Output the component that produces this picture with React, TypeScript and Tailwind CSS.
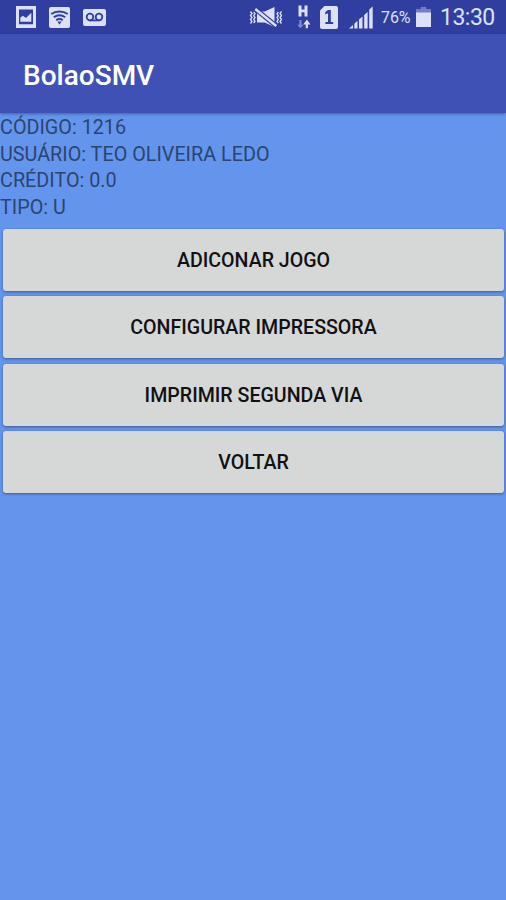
const infoLines = [
  'CÓDIGO: 1216',
  'USUÁRIO: TEO OLIVEIRA LEDO',
  'CRÉDITO: 0.0',
  'TIPO: U',
];

const menuItems = [
  'ADICONAR JOGO',
  'CONFIGURAR IMPRESSORA',
  'IMPRIMIR SEGUNDA VIA',
  'VOLTAR',
];

function ImageIcon() {
  return (
    <svg width="20" height="22" viewBox="0 0 20 22" className="shrink-0">
      <path fill="currentColor" fillRule="evenodd" d="M0 0h20v22H0zM3 3.5v14.7h14V3.5z" />
      <path fill="currentColor" d="M4.3 15.8v-4.3l2.7-1.8 3 2.2 5.3-5.2v9.1z" />
    </svg>
  );
}

function WifiIcon() {
  return (
    <svg width="21" height="21" viewBox="0 0 21 21" className="shrink-0">
      <rect width="21" height="21" rx="2" fill="currentColor" />
      <g fill="none" stroke="#303f9f" strokeWidth="2">
        <path d="M2.3 7c4.7-3.4 11.7-3.4 16.4 0" />
        <path d="M4.8 10.2c3.4-2.4 8-2.4 11.4 0" />
        <path d="M7.2 13.2c2-1.4 4.6-1.4 6.6 0" />
      </g>
      <path fill="#303f9f" d="M8.5 14.6h4L10.5 17.8z" />
    </svg>
  );
}

function VoicemailIcon() {
  return (
    <svg width="23" height="17" viewBox="0 0 23 17" className="shrink-0">
      <rect width="23" height="17" rx="2" fill="currentColor" />
      <g fill="none" stroke="#303f9f" strokeWidth="1.8">
        <circle cx="7" cy="8" r="3.3" />
        <circle cx="16" cy="8" r="3.3" />
        <path d="M7 11.4h9" />
      </g>
    </svg>
  );
}

function VibrateIcon() {
  return (
    <svg width="34" height="21" viewBox="0 0 34 21" className="shrink-0">
      <g fill="none" stroke="currentColor" strokeWidth="1.3">
        <path d="M1.5 4.5l1.5 2-1.5 2 1.5 2-1.5 2 1.5 2-1.5 2" />
        <path d="M4.7 5l1.3 1.8-1.3 1.9L6 10.5l-1.3 1.9L6 14.2 4.7 16" />
        <path d="M32.5 4.5l-1.5 2 1.5 2-1.5 2 1.5 2-1.5 2 1.5 2" />
        <path d="M29.3 5L28 6.8l1.3 1.9-1.3 1.8 1.3 1.9-1.3 1.8 1.3 1.8" />
      </g>
      <path fill="currentColor" d="M8 4.5h7.7L25.5 0v20l-9.8-4.5H8z" />
      <path stroke="#303f9f" strokeWidth="4.8" d="M6 1.8l21.5 17.4" />
      <path stroke="currentColor" strokeWidth="2.4" d="M6.3 2l21 17" />
    </svg>
  );
}

function DataIcon() {
  return (
    <svg width="14" height="24" viewBox="0 0 14 24" className="shrink-0">
      <path fill="currentColor" d="M1.5 .5h3v4h3v-4h3v11h-3V7.2h-3v4.3h-3z" />
      <path fill="currentColor" opacity=".5" d="M2.4 15h2v4.8h2l-3 3.4-3-3.4h2z" />
      <path fill="currentColor" d="M8.7 23.2h2.3v-3.8h2.5L9.9 14.6l-3.7 4.8h2.5z" />
    </svg>
  );
}

function SimIcon() {
  return (
    <svg width="18" height="23" viewBox="0 0 18 23" className="shrink-0">
      <path fill="currentColor" d="M4.5 0H16a2 2 0 0 1 2 2v19a2 2 0 0 1-2 2H2a2 2 0 0 1-2-2V4.5z" />
      <path fill="#303f9f" d="M8 4h2.8v12h2.4v2H5.4v-2H8V7.2L5.3 8.5V6z" />
    </svg>
  );
}

function SignalIcon() {
  return (
    <svg width="25" height="23" viewBox="0 0 25 23" className="shrink-0">
      <path
        fill="currentColor"
        d="M0 22.5l4-3.5v3.5zM5.3 17.8l3.2-3v7.7H5.3zM10 13.6l3.5-3v11.9H10zM15.2 9l3.4-3v16.5h-3.4zM20.2 3.6L23.7.6v21.9h-3.5z"
      />
    </svg>
  );
}

function BatteryIcon() {
  return (
    <svg width="15" height="20" viewBox="0 0 15 20" className="shrink-0">
      <path fill="currentColor" opacity=".4" d="M4.8 0h5.4v2H15v4H0V2h4.8z" />
      <path fill="currentColor" d="M0 5.5h15V20H0z" />
    </svg>
  );
}

function StatusBar() {
  return (
    <div className="flex h-[34px] items-center justify-between bg-[#303f9f] pl-4 pr-2.5 text-[#dce0f8]">
      <div className="flex items-center gap-[13px]">
        <ImageIcon />
        <WifiIcon />
        <VoicemailIcon />
      </div>
      <div className="flex items-center">
        <VibrateIcon />
        <div className="ml-3.5 flex items-center gap-[9px]">
          <DataIcon />
          <SimIcon />
        </div>
        <div className="ml-[11px] flex">
          <SignalIcon />
        </div>
        <span className="ml-[7px] w-[35px] pt-px text-[16px] leading-none tracking-[-0.1px]">76%</span>
        <BatteryIcon />
        <span className="ml-[9px] w-[56px] whitespace-nowrap pt-px text-[23px] leading-none tracking-[-0.5px]">13:30</span>
      </div>
    </div>
  );
}

export default function App() {
  return (
    <div className="h-[900px] w-[506px] overflow-hidden bg-[#6495ed] font-[Roboto,sans-serif]">
      <StatusBar />

      <header className="flex h-[79px] items-center bg-[#3f51b5] pl-[23px] pt-1 shadow-[0_1px_3px_rgba(0,0,0,0.35)]">
        <h1 className="text-[28px] font-medium leading-8 text-white">BolaoSMV</h1>
      </header>

      <main>
        <div className="pt-0.5 text-[19.8px] leading-[26.7px] text-[#2b4470]">
          {infoLines.map((line) => (
            <p key={line}>{line}</p>
          ))}
        </div>

        <div className="flex flex-col gap-[5.5px] pl-[3px] pr-0.5 pt-[6.7px]">
          {menuItems.map((item) => (
            <button
              key={item}
              type="button"
              className="h-[62px] rounded-[3px] bg-[#d6d8d7] pt-0.5 text-[19.6px] font-medium text-[#111111] shadow-[0_1px_3px_rgba(0,0,0,0.4)]"
            >
              {item}
            </button>
          ))}
        </div>
      </main>
    </div>
  );
}
